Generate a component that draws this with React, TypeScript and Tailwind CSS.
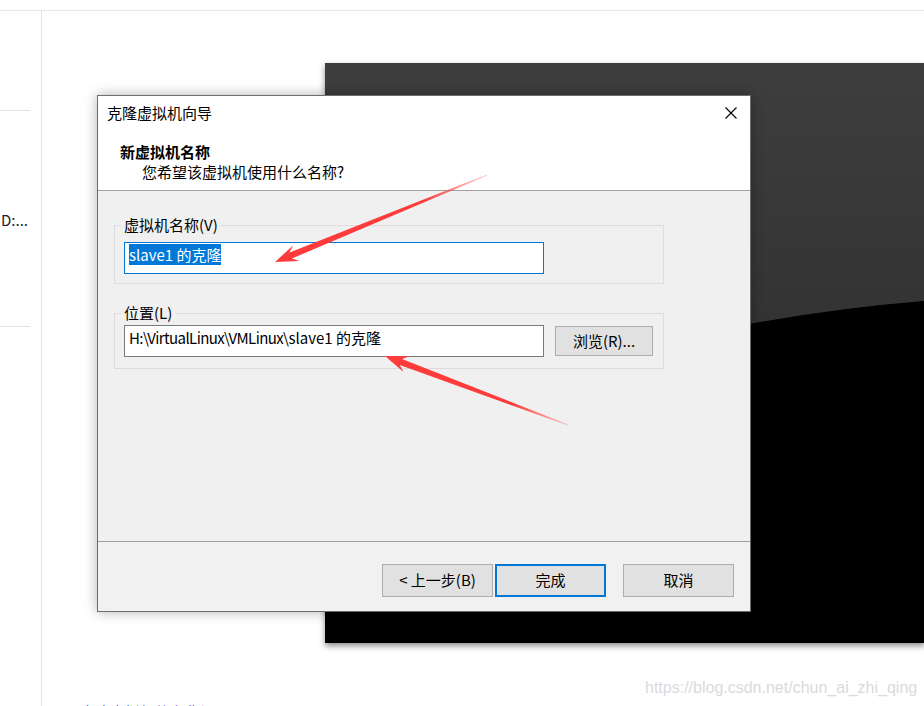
import type { ReactNode } from 'react';

type Pt = [number, number];

// tapered annotation arrow from tail to tip
function arrowPath(tail: Pt, tip: Pt) {
  const [sx, sy] = tail;
  const [tx, ty] = tip;
  const len = Math.hypot(tx - sx, ty - sy);
  const ux = (tx - sx) / len;
  const uy = (ty - sy) / len;
  const nx = -uy;
  const ny = ux;
  const at = (d: number, w: number): string => {
    const x = tx - ux * d + nx * w;
    const y = ty - uy * d + ny * w;
    return `${x.toFixed(1)},${y.toFixed(1)}`;
  };
  return `M${at(len, 0.6)} L${at(17, 3.2)} L${at(23, 8.5)} L${at(0, 0)} L${at(23, -8.5)} L${at(17, -3.2)} L${at(len, -0.6)} Z`;
}

function GroupBox({ label, className, children }: { label: string; className: string; children: ReactNode }) {
  return (
    <fieldset className={`border border-[#dcdcdc] px-[9px] ${className}`}>
      <legend className="ml-[-3px] px-[3px] leading-[20px]">{label}</legend>
      {children}
    </fieldset>
  );
}

function DlgButton({ children, primary }: { children: ReactNode; primary?: boolean }) {
  return (
    <button
      className={`w-[111px] h-[33px] bg-[#e1e1e1] text-black ${
        primary ? 'border-2 border-[#0078d7]' : 'border border-[#adadad]'
      }`}
    >
      {children}
    </button>
  );
}

export default function App() {
  return (
    <div className="relative w-[924px] h-[706px] overflow-hidden bg-white text-[15px] text-black font-['Noto_Sans_CJK_SC',sans-serif]">
      <div className="h-[11px] border-b border-[#e6e6e6]" />
      <div className="flex h-[695px]">
        {/* left column */}
        <div className="w-[42px] shrink-0 border-r border-[#e2e2e2] flex flex-col">
          <div className="mt-[99px] h-px w-[30px] bg-[#e2e2e2]" />
          <div className="mt-[99px] pl-px leading-[20px] text-[#1c1c2a] whitespace-nowrap">D:...</div>
          <div className="mt-[96px] h-px w-[30px] bg-[#e2e2e2]" />
        </div>

        <main className="relative flex-1 pl-[38px] pt-[691px]">
          <div className="leading-[20px] text-[#5b4fd0] whitespace-nowrap">克隆虚拟机的名称设置</div>

          {/* VM console window behind the dialog */}
          <div className="absolute left-[283px] top-[52px] w-[600px] h-[580px] overflow-hidden bg-gradient-to-b from-[#3e3e3e] to-[#262626] shadow-[0_3px_6px_rgba(0,0,0,0.45)]">
            <svg width="600" height="580" className="block">
              <path d="M0,390 Q300,262 600,238 L600,580 L0,580 Z" fill="#000" />
            </svg>
          </div>

          {/* clone wizard dialog */}
          <div className="absolute left-[55px] top-[84px] w-[654px] h-[517px] flex flex-col border border-[#6d6d6d] bg-[#f0f0f0] shadow-[0_0_12px_rgba(0,0,0,0.3)]">
            <div className="bg-white border-b border-[#a0a0a0]">
              <div className="h-[34px] flex items-center justify-between pl-[9px] pr-[13px]">
                <span>克隆虚拟机向导</span>
                <svg width="12" height="12" viewBox="0 0 12 12">
                  <path d="M0.5 0.5 L11.5 11.5 M11.5 0.5 L0.5 11.5" stroke="#000" strokeWidth="1.1" />
                </svg>
              </div>
              <div className="pt-[12px] pb-[8px] leading-[20px]">
                <div className="pl-[22px] font-bold">新虚拟机名称</div>
                <div className="pl-[44px]">您希望该虚拟机使用什么名称?</div>
              </div>
            </div>

            <div className="flex-1 pl-[16px] pt-[24px]">
              <GroupBox label="虚拟机名称(V)" className="w-[550px] pb-[9px]">
                <div className="mt-[7px] w-[420px] h-[32px] bg-white border border-[#0078d7] pl-[4px] pt-[4px] leading-[16px]">
                  <span className="bg-[#0078d7] text-white">slave1 的克隆</span>
                </div>
              </GroupBox>
              <GroupBox label="位置(L)" className="w-[550px] mt-[19px] pb-[11px]">
                <div className="mt-[2px] flex items-start">
                  <div className="w-[420px] h-[32px] bg-white border border-[#7a7a7a] pl-[4px] pt-[4px] leading-[16px] whitespace-nowrap">
                    <span className="tracking-[-0.6px]">H:\VirtualLinux\VMLinux\</span>slave1 的克隆
                  </div>
                  <button className="ml-[11px] mt-px w-[98px] h-[30px] bg-[#e1e1e1] border border-[#adadad]">浏览(R)...</button>
                </div>
              </GroupBox>
            </div>

            <div className="h-[70px] border-t border-[#a0a0a0] bg-[#f1f1f1] flex justify-end items-start pt-[22px] pr-[16px]">
              <DlgButton>&lt; 上一步(B)</DlgButton>
              <div className="ml-[2px]">
                <DlgButton primary>完成</DlgButton>
              </div>
              <div className="ml-[17px]">
                <DlgButton>取消</DlgButton>
              </div>
            </div>
          </div>
        </main>
      </div>

      {/* red annotation arrows */}
      <svg className="absolute left-0 top-0 pointer-events-none" width="924" height="706">
        <defs>
          <linearGradient id="a1" gradientUnits="userSpaceOnUse" x1="487" y1="175" x2="275" y2="262">
            <stop offset="0" stopColor="#ff4a4a" stopOpacity="0.25" />
            <stop offset="0.3" stopColor="#ff3c3c" />
            <stop offset="1" stopColor="#ff3a3a" />
          </linearGradient>
          <linearGradient id="a2" gradientUnits="userSpaceOnUse" x1="568" y1="425" x2="385" y2="356">
            <stop offset="0" stopColor="#ff4a4a" stopOpacity="0.25" />
            <stop offset="0.3" stopColor="#ff3c3c" />
            <stop offset="1" stopColor="#ff3a3a" />
          </linearGradient>
        </defs>
        <path d={arrowPath([487, 175], [275, 262])} fill="url(#a1)" />
        <path d={arrowPath([568, 425], [385, 356])} fill="url(#a2)" />
      </svg>

      <div className="absolute left-[645px] top-[678px] text-[16px] leading-[20px] text-[#dadada] font-['Liberation_Sans',sans-serif]">
        https://blog.csdn.net/chun_ai_zhi_qing
      </div>
    </div>
  );
}
